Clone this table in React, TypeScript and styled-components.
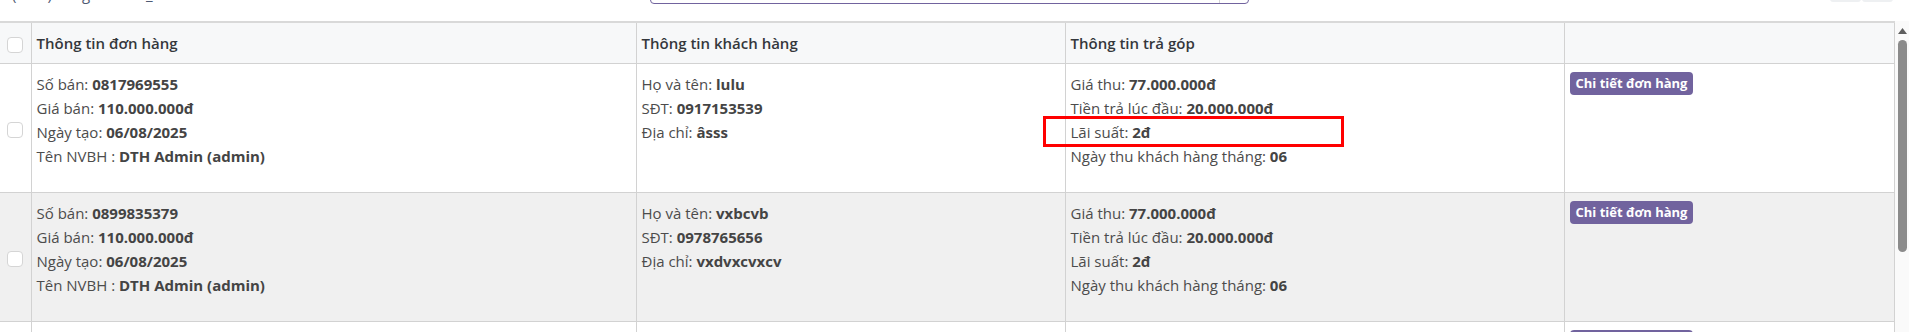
import styled, { createGlobalStyle } from "styled-components";
import { Fragment } from "react";

/*-----------------------------------------------------------------------------------*/

type Order = {
  soBan: string;
  giaBan: string;
  ngayTao: string;
  nvbh: string;
  hoTen: string;
  sdt: string;
  diaChi: string;
  giaThu: string;
  traTruoc: string;
  laiSuat: string;
  ngayThu: string;
  marked?: boolean;
};

const orders: Order[] = [
  {
    soBan: "0817969555",
    giaBan: "110.000.000đ",
    ngayTao: "06/08/2025",
    nvbh: "DTH Admin (admin)",
    hoTen: "lulu",
    sdt: "0917153539",
    diaChi: "âsss",
    giaThu: "77.000.000đ",
    traTruoc: "20.000.000đ",
    laiSuat: "2đ",
    ngayThu: "06",
    marked: true,
  },
  {
    soBan: "0899835379",
    giaBan: "110.000.000đ",
    ngayTao: "06/08/2025",
    nvbh: "DTH Admin (admin)",
    hoTen: "vxbcvb",
    sdt: "0978765656",
    diaChi: "vxdvxcvxcv",
    giaThu: "77.000.000đ",
    traTruoc: "20.000.000đ",
    laiSuat: "2đ",
    ngayThu: "06",
  },
  {
    soBan: "0868123456",
    giaBan: "110.000.000đ",
    ngayTao: "05/08/2025",
    nvbh: "DTH Admin (admin)",
    hoTen: "test",
    sdt: "0912345678",
    diaChi: "hà nội",
    giaThu: "77.000.000đ",
    traTruoc: "20.000.000đ",
    laiSuat: "2đ",
    ngayThu: "05",
  },
];

/*-----------------------------------------------------------------------------------*/

export default function App() {
  return (
    <Fragment>
      <GlobalStyle />
      <Page>
        <TopBar>
          <Summary>(VNĐ) mã gói cước ₫</Summary>
          <SearchBox>
            <SearchInput />
            <SearchToggle />
          </SearchBox>
          <Pager>
            <PagerButton />
            <PagerButton />
          </Pager>
        </TopBar>

        <ListArea>
          <TableWrap>
            <Table>
              <colgroup>
                <col style={{ width: 31 }} />
                <col style={{ width: 605 }} />
                <col style={{ width: 429 }} />
                <col style={{ width: 499 }} />
                <col />
              </colgroup>
              <thead>
                <tr>
                  <Th $center>
                    <Checkbox />
                  </Th>
                  <Th>Thông tin đơn hàng</Th>
                  <Th>Thông tin khách hàng</Th>
                  <Th>Thông tin trả góp</Th>
                  <Th />
                </tr>
              </thead>
              <tbody>
                {orders.map((o, i) => (
                  <Row key={o.soBan} $striped={i % 2 === 1}>
                    <Td $center>
                      <Checkbox />
                    </Td>
                    <Td>
                      <Line>Số bán: <b>{o.soBan}</b></Line>
                      <Line>Giá bán: <b>{o.giaBan}</b></Line>
                      <Line>Ngày tạo: <b>{o.ngayTao}</b></Line>
                      <Line>Tên NVBH : <b>{o.nvbh}</b></Line>
                    </Td>
                    <Td>
                      <Line>Họ và tên: <b>{o.hoTen}</b></Line>
                      <Line>SĐT: <b>{o.sdt}</b></Line>
                      <Line>Địa chỉ: <b>{o.diaChi}</b></Line>
                    </Td>
                    <Td>
                      <Line>Giá thu: <b>{o.giaThu}</b></Line>
                      <Line>Tiền trả lúc đầu: <b>{o.traTruoc}</b></Line>
                      <Line>
                        Lãi suất: <b>{o.laiSuat}</b>
                        {o.marked && <Highlight />}
                      </Line>
                      <Line>Ngày thu khách hàng tháng: <b>{o.ngayThu}</b></Line>
                    </Td>
                    <Td>
                      <DetailButton>Chi tiết đơn hàng</DetailButton>
                    </Td>
                  </Row>
                ))}
              </tbody>
            </Table>
          </TableWrap>

          <ScrollRail>
            <svg width="9" height="6" viewBox="0 0 9 6">
              <path d="M4.5 0 L9 6 L0 6 Z" fill="#5f5f5f" />
            </svg>
            <Thumb />
          </ScrollRail>
        </ListArea>
      </Page>
    </Fragment>
  );
}

/*-----------------------------------------------------------------------------------*/

const GlobalStyle = createGlobalStyle`
  html, body {
    margin: 0;
    padding: 0;
    background: #fff;
  }
  body {
    font-family: "Open Sans", "Noto Sans", sans-serif;
    font-size: 15px;
    color: #4c4c4c;
    overflow: hidden;
  }
`;

const Page = styled.div`
  display: flex;
  flex-direction: column;
  height: 332px;
  overflow: hidden;
`;

const TopBar = styled.div`
  display: flex;
  align-items: flex-end;
  flex-shrink: 0;
  height: 21px;
  overflow: hidden;
`;

const Summary = styled.div`
  width: 650px;
  flex-shrink: 0;
  box-sizing: border-box;
  padding-left: 12px;
  line-height: 20px;
  margin-bottom: 17px;
  color: #4e5a73;
  white-space: nowrap;
`;

const SearchBox = styled.div`
  display: flex;
  width: 599px;
  flex-shrink: 0;
  height: 34px;
  margin-bottom: 17px;
  border: 1px solid #71639e;
  border-radius: 4px;
  box-sizing: border-box;
`;

const SearchInput = styled.div`
  flex: 1;
`;

const SearchToggle = styled.div`
  width: 28px;
  border-left: 1px solid #d6d6d6;
`;

const Pager = styled.div`
  display: flex;
  gap: 1px;
  margin: 0 16px 19px auto;
`;

const PagerButton = styled.div`
  width: 31px;
  height: 30px;
  background: #eef0f2;
  border-radius: 3px;
`;

const ListArea = styled.div`
  flex: 1;
  display: flex;
  min-height: 0;
`;

const TableWrap = styled.div`
  width: 1895px;
  overflow: hidden;
`;

const Table = styled.table`
  width: 1895px;
  table-layout: fixed;
  border-collapse: collapse;
`;

const Th = styled.th<{ $center?: boolean }>`
  height: 40px;
  padding: 0 5px;
  text-align: ${({ $center }) => ($center ? "center" : "left")};
  vertical-align: middle;
  font-weight: 600;
  color: #34373c;
  line-height: 24px;
  background: #f7f8f9;
  border-top: 2px solid #d9d9d9;
  border-bottom: 1px solid #d2d2d2;
  border-left: 1px solid #d2d2d2;
  border-right: 1px solid #d2d2d2;

  &:first-child {
    border-left: none;
  }
`;

const Row = styled.tr<{ $striped?: boolean }>`
  background: ${({ $striped }) => ($striped ? "#f0f0f0" : "#fff")};
`;

const Td = styled.td<{ $center?: boolean }>`
  padding: 8px 5px 24px;
  vertical-align: ${({ $center }) => ($center ? "middle" : "top")};
  text-align: ${({ $center }) => ($center ? "center" : "left")};
  border: 1px solid #d2d2d2;
  border-top: none;

  &:first-child {
    border-left: none;
    padding: 0;
  }
`;

const Line = styled.div`
  position: relative;
  line-height: 24px;
  white-space: nowrap;

  b {
    font-weight: 700;
    color: #444;
  }
`;

const Highlight = styled.span`
  position: absolute;
  left: -28px;
  top: -4px;
  width: 301px;
  height: 31px;
  border: 3px solid #ff0000;
  box-sizing: border-box;
`;

const Checkbox = styled.span`
  display: inline-block;
  width: 16px;
  height: 16px;
  box-sizing: border-box;
  border: 1px solid #d5d5d5;
  border-radius: 4px;
  background: #fff;
  vertical-align: middle;
`;

const DetailButton = styled.span`
  display: inline-block;
  height: 23px;
  line-height: 23px;
  padding: 0 6px;
  border-radius: 4px;
  background: #71639e;
  color: #fff;
  font-size: 13px;
  font-weight: 700;
  white-space: nowrap;
`;

const ScrollRail = styled.div`
  flex: 1;
  display: flex;
  flex-direction: column;
  align-items: center;
  padding-top: 7px;
  background: #fafafa;
`;

const Thumb = styled.div`
  width: 9px;
  height: 212px;
  margin-top: 6px;
  border-radius: 5px;
  background: #8b8b8b;
`;
